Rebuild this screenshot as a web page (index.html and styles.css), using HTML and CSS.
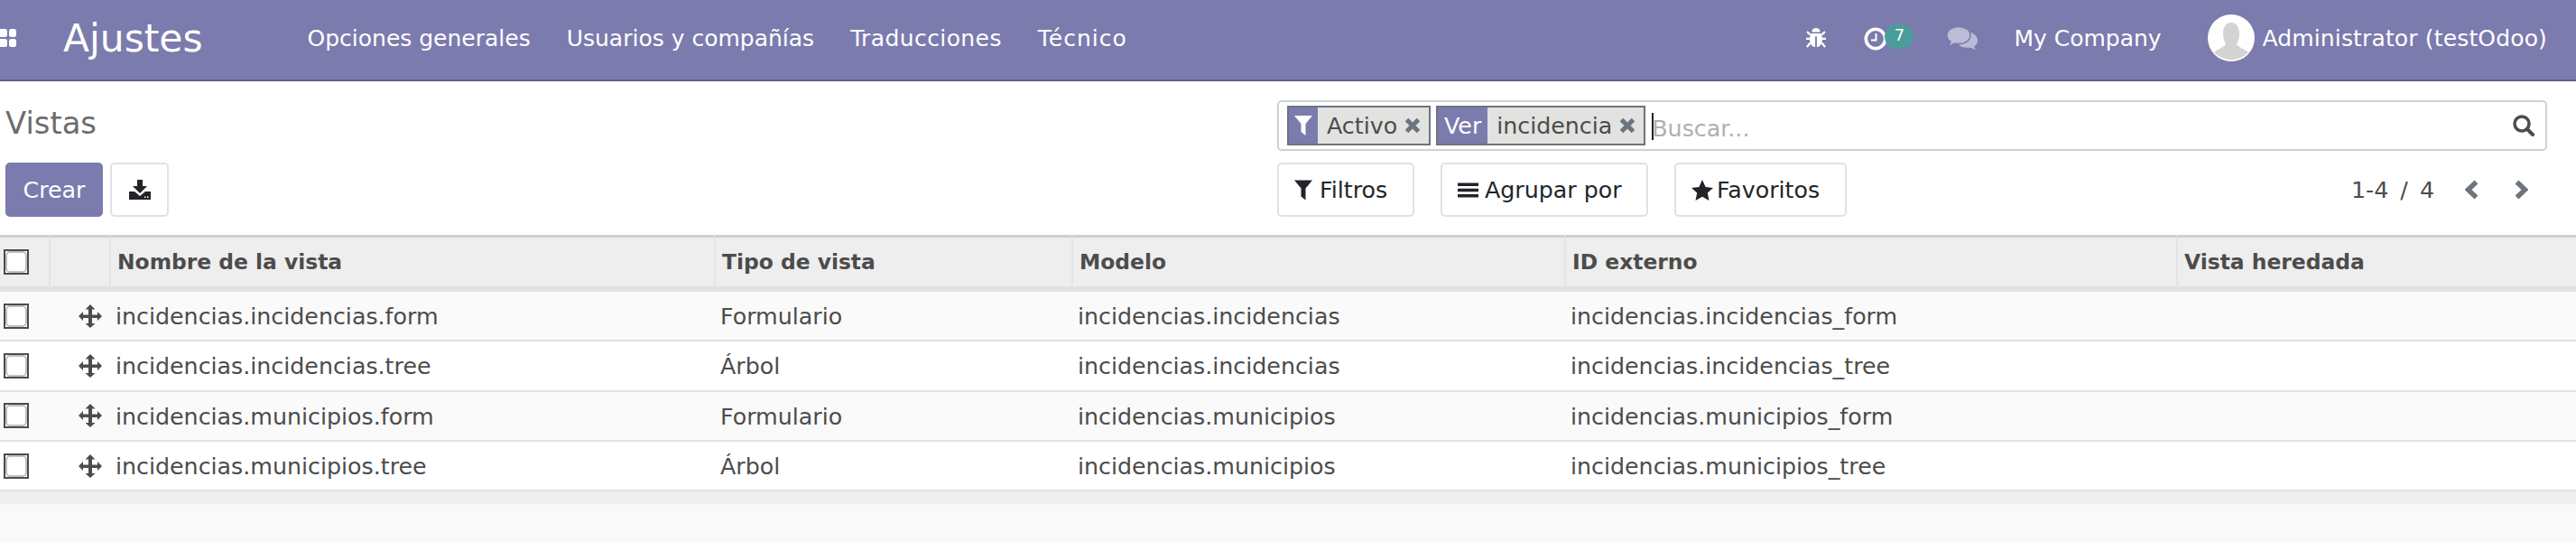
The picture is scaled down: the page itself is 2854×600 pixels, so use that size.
FILE: index.html
```html
<!DOCTYPE html>
<html lang="es">
<head>
    <meta charset="UTF-8">
    <title>Vistas - Ajustes</title>
    <link rel="stylesheet" href="styles.css">
</head>
<body>
    <!-- Barra superior -->
    <header class="navbar">
        <svg class="apps-icon" viewBox="0 0 18 20"><rect x="-6" y="0" width="14" height="9" rx="2.500"/><rect x="-6" y="11" width="14" height="9" rx="2.500"/><rect x="10" y="0" width="8" height="9" rx="2.500"/><rect x="10" y="11" width="8" height="9" rx="2.500"/></svg>
        <span class="brand">Ajustes</span>
        <nav class="menu">
            <a>Opciones generales</a>
            <a>Usuarios y compañías</a>
            <a class="menu-wide">Traducciones</a>
            <a class="menu-wider">Técnico</a>
        </nav>
        <div class="systray">
            <svg class="bug-icon" viewBox="0 0 24 26"><path d="M7 6a5 5 0 0 1 10 0z"/><path d="M6 7.500h12c1 2 1.500 3 1.500 5.500v3c0 4-3 8-6.500 8V11h-2v13c-3.500 0-6.500-4-6.500-8v-3c0-2.500.5-3.500 1.500-5.500z"/><path d="M5 9 1 5.500M19 9l4-3.500M5 14H0M19 14h5M5 19l-4 5M19 19l4 5" stroke="#fff" stroke-width="2.400" fill="none"/></svg>
            <span class="activity">
                <svg class="clock-icon" viewBox="0 0 26 26"><circle cx="13" cy="13" r="10.700" fill="none" stroke="#fff" stroke-width="3.600"/><path d="M13.500 7v7.500H8" fill="none" stroke="#fff" stroke-width="2"/></svg>
                <span class="badge">7</span>
            </span>
            <svg class="chat-icon" viewBox="0 0 34 26"><path d="M20 6c8 0 14 4 14 10 0 3-1.500 5-4 6.500l2 3.500-7-2.500c-4 .5-8 0-11-2z"/><path d="M13 .5c7.500 0 13 4 13 9.500s-5.500 9.500-13 9.500c-1.500 0-2.500 0-4-.4L1.500 22.500 4 17C1.500 15.500 0 13 0 10 0 4.500 5.500.5 13 .5z" stroke="#7c7bad" stroke-width="1.500"/></svg>
            <span class="company">My Company</span>
            <span class="avatar"><svg viewBox="0 0 52 52"><circle cx="26" cy="26" r="26" fill="#fff"/><path d="M26 9c6 0 9 5 9 12 0 6-2 10-3 12 2 3 8 5 13 9a26 26 0 0 1-38 0c5-4 11-6 13-9-1-2-3-6-3-12 0-7 3-12 9-12z" fill="#d3d3d3"/></svg></span>
            <span class="user">Administrator (testOdoo)</span>
        </div>
    </header>

    <!-- Panel de control -->
    <section class="control-panel">
        <div class="cp-left">
            <h1 class="title">Vistas</h1>
            <div class="cp-buttons">
                <button class="btn btn-primary">Crear</button>
                <button class="btn btn-icon">
                    <svg class="download-icon" viewBox="0 0 24 22"><path d="M9 0h6v7h5l-8 8-8-8h5z"/><path d="M0 13h6l6 5 6-5h6v9H0z"/><rect x="17" y="18.500" width="1.500" height="1.500" fill="#fff"/><rect x="20" y="18.500" width="1.500" height="1.500" fill="#fff"/></svg>
                </button>
            </div>
        </div>
        <div class="cp-right">
            <div class="searchview">
                <div class="facet">
                    <span class="facet-label"><svg class="filter-icon" viewBox="0 0 20 22"><path d="M0 0h20l-7.500 9v13l-5-4V9z" fill="#fff"/></svg></span>
                    <span class="facet-value">Activo</span>
                    <svg class="facet-remove" viewBox="0 0 18 18"><path d="M2.500 2.500l13 13M15.500 2.500l-13 13"/></svg>
                </div>
                <div class="facet">
                    <span class="facet-label facet-text">Ver</span>
                    <span class="facet-value">incidencia</span>
                    <svg class="facet-remove" viewBox="0 0 18 18"><path d="M2.500 2.500l13 13M15.500 2.500l-13 13"/></svg>
                </div>
                <span class="caret"></span>
                <span class="placeholder">Buscar...</span>
                <svg class="search-icon" viewBox="0 0 24 24"><circle cx="10" cy="10" r="8" fill="none" stroke="#4c4c4c" stroke-width="3.500"/><path d="M16 16l6 6" stroke="#4c4c4c" stroke-width="4" stroke-linecap="round"/></svg>
            </div>
            <div class="cp-row">
                <div class="filters">
                    <button class="btn btn-filter btn-filtros">
                        <svg class="btn-glyph" viewBox="0 0 20 22"><path d="M0 0h20l-7.500 9v13l-5-4V9z"/></svg>Filtros
                    </button>
                    <button class="btn btn-filter btn-group">
                        <svg class="btn-glyph" viewBox="0 0 23 20"><path d="M0 2h23v3.500H0zM0 8.200h23v3.500H0zM0 14.500h23V18H0z"/></svg>Agrupar por
                    </button>
                    <button class="btn btn-filter btn-fav">
                        <svg class="btn-glyph" viewBox="0 0 24 23"><path d="m12 0 3.600 8 8.400.9-6.200 5.700 1.700 8.400L12 18.800 4.500 23l1.700-8.400L0 8.900 8.400 8z"/></svg>Favoritos
                    </button>
                </div>
                <div class="pager">
                    <span class="pager-text">1-4 / 4</span>
                    <svg class="chevron" viewBox="0 0 15 22"><path d="M12.500 2.500 3.500 11l9 8.500"/></svg>
                    <svg class="chevron" viewBox="0 0 15 22"><path d="M2.500 2.500l9 8.500-9 8.500"/></svg>
                </div>
            </div>
        </div>
    </section>

    <!-- Lista -->
    <table class="list">
        <colgroup>
            <col class="col-check"><col class="col-handle"><col class="col-name"><col class="col-type"><col class="col-model"><col class="col-id"><col>
        </colgroup>
        <thead>
            <tr>
                <th><span class="check"></span></th>
                <th></th>
                <th>Nombre de la vista</th>
                <th>Tipo de vista</th>
                <th>Modelo</th>
                <th>ID externo</th>
                <th>Vista heredada</th>
            </tr>
        </thead>
        <tbody>
            <tr>
                <td class="cell-check"><span class="check"></span></td>
                <td class="handle"><svg class="move-icon" viewBox="0 0 26 26"><path d="M13 0l5.500 5.500h-3.500v6h6V8l5 5-5 5v-3h-6v6h3.500L13 26l-5.500-5H11v-6H5v3l-5-5 5-5v3.500h6v-6H7.500z"/></svg></td>
                <td>incidencias.incidencias.form</td>
                <td>Formulario</td>
                <td>incidencias.incidencias</td>
                <td>incidencias.incidencias_form</td>
                <td></td>
            </tr>
            <tr>
                <td class="cell-check"><span class="check"></span></td>
                <td class="handle"><svg class="move-icon" viewBox="0 0 26 26"><path d="M13 0l5.500 5.500h-3.500v6h6V8l5 5-5 5v-3h-6v6h3.500L13 26l-5.500-5H11v-6H5v3l-5-5 5-5v3.500h6v-6H7.500z"/></svg></td>
                <td>incidencias.incidencias.tree</td>
                <td>Árbol</td>
                <td>incidencias.incidencias</td>
                <td>incidencias.incidencias_tree</td>
                <td></td>
            </tr>
            <tr>
                <td class="cell-check"><span class="check"></span></td>
                <td class="handle"><svg class="move-icon" viewBox="0 0 26 26"><path d="M13 0l5.500 5.500h-3.500v6h6V8l5 5-5 5v-3h-6v6h3.500L13 26l-5.500-5H11v-6H5v3l-5-5 5-5v3.500h6v-6H7.500z"/></svg></td>
                <td>incidencias.municipios.form</td>
                <td>Formulario</td>
                <td>incidencias.municipios</td>
                <td>incidencias.municipios_form</td>
                <td></td>
            </tr>
            <tr>
                <td class="cell-check"><span class="check"></span></td>
                <td class="handle"><svg class="move-icon" viewBox="0 0 26 26"><path d="M13 0l5.500 5.500h-3.500v6h6V8l5 5-5 5v-3h-6v6h3.500L13 26l-5.500-5H11v-6H5v3l-5-5 5-5v3.500h6v-6H7.500z"/></svg></td>
                <td>incidencias.municipios.tree</td>
                <td>Árbol</td>
                <td>incidencias.municipios</td>
                <td>incidencias.municipios_tree</td>
                <td></td>
            </tr>
        </tbody>
    </table>
    <div class="list-footer"></div>
</body>
</html>
```

FILE: styles.css
```css
body {
    font-family: "DejaVu Sans", sans-serif;
    font-size: 25.3px;
    margin: 0;
    height: 600px;
    overflow: hidden;
    background-color: #f9f9f9;
    color: #4c4c4c;
}

/* Barra superior */
.navbar {
    display: flex;
    align-items: center;
    height: 84px;
    padding-bottom: 4px;
    background-color: #7c7bad;
    border-bottom: 2px solid #5f5e8f;
    color: #fff;
    font-size: 25px;
}

.apps-icon {
    width: 18px;
    height: 20px;
    fill: #fff;
    margin-right: 52px;
}

.brand {
    font-size: 42.400px;
    margin-right: 116px;
}

.menu {
    display: flex;
    gap: 40px;
}

.menu-wide {
    letter-spacing: 0.4px;
}

.menu-wider {
    letter-spacing: 1px;
}

.systray {
    display: flex;
    align-items: center;
    margin-left: auto;
    padding-right: 32px;
}

.bug-icon {
    width: 22px;
    height: 24px;
    fill: #fff;
    margin-right: 42px;
}

.activity {
    display: flex;
    align-items: center;
    margin-right: 37px;
}

.clock-icon {
    width: 26px;
    height: 26px;
    margin-top: 2px;
}

.badge {
    width: 32px;
    height: 27px;
    background-color: #4a9d9a;
    border-radius: 14px;
    font-size: 18px;
    line-height: 23px;
    text-align: center;
    margin: -3px 0 0 -3px;
}

.chat-icon {
    width: 34px;
    height: 26px;
    fill: #bdbcd6;
    margin-right: 40px;
}

.company {
    width: 215px;
}

.avatar {
    display: flex;
    margin: 0 8px 0 auto;
}

.avatar svg {
    width: 52px;
    height: 52px;
}

.user {
    letter-spacing: 0.15px;
}

/* Panel de control */
.control-panel {
    display: flex;
    justify-content: space-between;
    height: 170px;
    background-color: #fff;
    padding: 0 32px 0 6px;
}

.title {
    font-size: 33.800px;
    font-weight: normal;
    color: #6c6c6c;
    margin: 27px 0 23px;
    line-height: 40px;
}

.cp-buttons {
    display: flex;
    gap: 8px;
}

.btn {
    font-family: inherit;
    font-size: 25.3px;
    height: 60px;
    border-radius: 5px;
    padding: 0;
    background-color: #fff;
    color: #212529;
    border: 2px solid #dee2e6;
    display: flex;
    align-items: center;
    justify-content: center;
}

.btn-primary {
    width: 108px;
    background-color: #7c7bad;
    border-color: #7c7bad;
    color: #fff;
}

.btn-icon {
    width: 65px;
}

.download-icon {
    width: 24px;
    height: 22px;
    fill: #212529;
}

.cp-right {
    width: 1407px;
    padding-top: 21px;
}

.searchview {
    display: flex;
    align-items: center;
    height: 56px;
    box-sizing: border-box;
    border: 2px solid #ced0d2;
    border-radius: 5px;
    padding: 0 10px 0 9px;
}

.facet {
    display: flex;
    align-items: center;
    height: 44px;
    box-sizing: border-box;
    border: 2px solid #6c757d;
    background-color: #e2e2e0;
    margin-right: 6px;
}

.facet-label {
    display: flex;
    align-items: center;
    justify-content: center;
    align-self: stretch;
    width: 32px;
    background-color: #7c7bad;
    color: #fff;
}

.facet-text {
    width: 55px;
}

.filter-icon {
    width: 20px;
    height: 24px;
}

.facet-value {
    padding: 0 8px 0 10px;
}

.facet-remove {
    width: 18px;
    height: 18px;
    margin-right: 9px;
    fill: none;
    stroke: #6c757d;
    stroke-width: 5;
}

.caret {
    width: 2px;
    height: 30px;
    margin: 2px 0 0 1px;
    background-color: #222;
}

.placeholder {
    color: #b0b0b0;
    flex: 1;
    padding-top: 6px;
    margin-left: -2px;
}

.search-icon {
    width: 24px;
    height: 24px;
    margin-right: 2px;
}

.cp-row {
    display: flex;
    justify-content: space-between;
    margin-top: 13px;
}

.filters {
    display: flex;
    gap: 29px;
}

.btn-filter {
    justify-content: flex-start;
    padding-left: 17px;
    gap: 7px;
}

.btn-filtros {
    width: 152px;
    gap: 8px;
}

.btn-group { width: 230px; }

.btn-fav {
    width: 191px;
    gap: 4px;
}

.btn-glyph {
    width: 23px;
    height: 23px;
    fill: #212529;
}

.btn-filtros .btn-glyph {
    width: 20px;
}

.btn-fav .btn-glyph {
    width: 24px;
}

.pager {
    display: flex;
    align-items: center;
    padding-right: 21px;
}

.pager-text {
    margin-right: 34px;
    word-spacing: 5px;
}

.chevron {
    width: 15px;
    height: 22px;
    margin-right: 40px;
    fill: none;
    stroke: #6c757d;
    stroke-width: 5.500;
}

.chevron:last-child {
    margin-right: 0;
}

/* Lista */
.list {
    width: 2854px;
    border-collapse: separate;
    border-spacing: 0;
    table-layout: fixed;
    background-color: #fff;
}

.col-check { width: 54px; }
.col-handle { width: 67px; }
.col-name { width: 670px; }
.col-type { width: 396px; }
.col-model { width: 546px; }
.col-id { width: 678px; }

.list th {
    box-sizing: border-box;
    height: 63px;
    text-align: left;
    font-size: 23.400px;
    font-weight: bold;
    background-color: #eee;
    border-top: 3px solid #cfd0d1;
    border-bottom: 6px solid #dee2e6;
    border-left: 2px solid #e4e4e4;
    padding: 0 0 0 7px;
}

.list th:first-child {
    border-left: 0;
    padding: 0 0 0 4px;
}

.list td {
    box-sizing: border-box;
    height: 55.300px;
    border-bottom: 2px solid #dee2e6;
    padding: 2px 0 0 7px;
}

.list td.cell-check {
    padding: 0 0 0 4px;
}

.list tbody tr:nth-child(odd) {
    background-color: #fafafa;
}

.check {
    display: block;
    box-sizing: border-box;
    width: 28px;
    height: 28px;
    border: 2px solid #4c4c4c;
    background-color: #fff;
}

.check::after {
    content: "";
    display: block;
    height: 20px;
    border: 2px solid #bcc1c8;
    border-radius: 5px;
}

.list td.handle {
    padding: 0 0 0 33px;
}

.move-icon {
    display: block;
    width: 26px;
    height: 26px;
    fill: #4c4c4c;
}

.list-footer {
    height: 14px;
    background-color: #eee;
}
```
